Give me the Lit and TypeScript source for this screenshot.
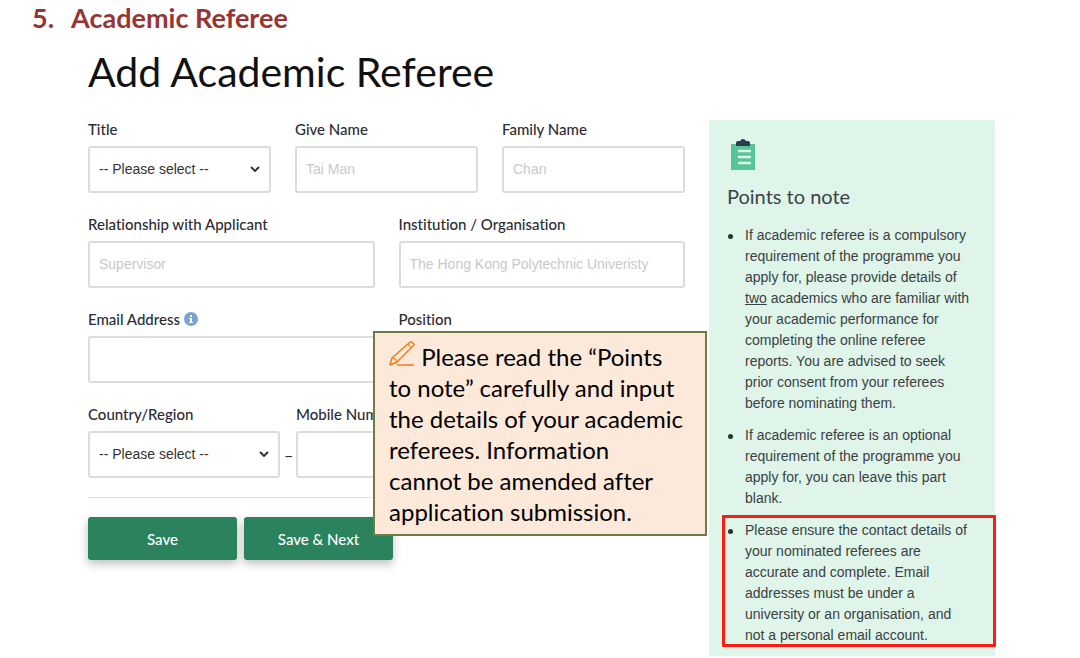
import { LitElement, html, css } from "lit";
import { customElement } from "lit/decorators.js";

@customElement("points-to-note")
class PointsToNote extends LitElement {
  static styles = css`
    :host {
      display: block;
      box-sizing: border-box;
      padding: 19px 16px 10px 18px;
      background: #dff5ea;
      color: #3b4043;
      font-family: "Liberation Sans", Arial, sans-serif;
    }
    .icon {
      display: block;
      width: 26px;
      height: 32px;
      margin-left: 3px;
    }
    .title {
      margin: 12px 0 16px;
      font: 400 20px/26px Lato, sans-serif;
      color: #3a4447;
    }
    .list {
      margin: 0;
      padding: 0;
      list-style: none;
    }
    .item {
      position: relative;
      margin-bottom: 11px;
      padding: 0 7px 0 18px;
      font-size: 14px;
      line-height: 21px;
    }
    .item:last-child {
      margin-bottom: 0;
    }
    .item::before {
      content: "";
      position: absolute;
      left: 1px;
      top: 9px;
      width: 5px;
      height: 5px;
      border-radius: 50%;
      background: #24332c;
    }
    .marked::after {
      content: "";
      position: absolute;
      inset: -5px -17px -1px -5px;
      border: 3px solid #fb1d14;
      border-radius: 1px;
    }
  `;

  render() {
    return html`
      <svg class="icon" viewBox="0 0 26 32" aria-hidden="true">
        <rect x="1" y="5" width="24" height="26" fill="#56c596" />
        <path d="M6 7V4q0-2 2-2h2q1-2 3-2t3 2h2q2 0 2 2v3z" fill="#2a3d50" />
        <path d="M8 12h13M8 18h13M8 24h13" stroke="#dff5ea" stroke-width="2.4" />
      </svg>
      <h2 class="title">Points to note</h2>
      <ul class="list">
        <li class="item">
          If academic referee is a compulsory requirement of the programme you
          apply for, please provide details of <u>two</u> academics who are
          familiar with your academic performance for completing the online
          referee reports. You are advised to seek prior consent from your
          referees before nominating them.
        </li>
        <li class="item">
          If academic referee is an optional requirement of the programme you
          apply for, you can leave this part blank.
        </li>
        <li class="item marked">
          Please ensure the contact details of your nominated referees are
          accurate and complete. Email addresses must be under a university or
          an organisation, and not a personal email account.
        </li>
      </ul>
    `;
  }
}

@customElement("app-root")
class AppRoot extends LitElement {
  static styles = css`
    :host {
      display: block;
      background: #fff;
      color: #2c2c34;
      font-family: Lato, sans-serif;
      font-variant-ligatures: none;
    }
    .section {
      display: flex;
      gap: 17px;
      margin: 0;
      padding: 2px 32px 0;
      font-size: 27px;
      line-height: 32px;
      font-weight: 700;
      color: #963634;
    }
    .page {
      padding: 14px 85px 0 88px;
    }
    .heading {
      margin: 0 0 24px;
      font-size: 41px;
      line-height: 48px;
      font-weight: 400;
      color: #111;
    }
    .columns {
      display: grid;
      grid-template-columns: minmax(0, 1fr) 286px;
      gap: 24px;
      align-items: start;
    }
    .form {
      position: relative;
    }
    .row {
      display: grid;
      gap: 24px;
      margin-bottom: 22px;
    }
    .three {
      grid-template-columns: repeat(3, minmax(0, 1fr));
    }
    .two {
      grid-template-columns: repeat(2, minmax(0, 1fr));
    }
    .phone {
      grid-template-columns: 192px 8px minmax(0, 1fr);
      gap: 4px;
      align-items: end;
      margin-bottom: 19px;
    }
    .dash {
      line-height: 47px;
      text-align: center;
    }
    .field {
      display: flex;
      flex-direction: column;
      gap: 8px;
      min-width: 0;
    }
    .label {
      display: flex;
      align-items: center;
      gap: 4px;
      font-size: 15px;
      line-height: 18px;
      font-weight: 500;
      white-space: nowrap;
    }
    .info {
      width: 14px;
      height: 14px;
    }
    .control {
      box-sizing: border-box;
      width: 100%;
      height: 47px;
      margin: 0;
      padding: 0 9px 2px;
      border: 2px solid #dcdcdc;
      border-radius: 3px;
      background: #fff;
      color: #333;
      font: 14px "Liberation Sans", Arial, sans-serif;
      appearance: none;
    }
    .control::placeholder {
      color: #c9c9c9;
      opacity: 1;
    }
    .pick {
      position: relative;
    }
    .chevron {
      position: absolute;
      right: 11px;
      top: 19px;
      width: 10px;
      height: 8px;
      pointer-events: none;
    }
    .actions {
      display: flex;
      gap: 7px;
      padding-top: 19px;
      border-top: 1px solid #e4e4e4;
    }
    .button {
      width: 149px;
      height: 43px;
      border: 0;
      border-radius: 3px;
      background: #2b835d;
      color: #fff;
      font: 500 15px Lato, sans-serif;
      box-shadow: 0 4px 10px rgba(0, 0, 0, 0.25);
    }
    .callout {
      position: absolute;
      top: 211px;
      right: -22px;
      box-sizing: border-box;
      width: 334px;
      margin: 0;
      padding: 8px 20px 7px 14px;
      border: 2px solid #6d7c47;
      background: #fde9da;
      color: #000;
      font-size: 24px;
      line-height: 31px;
    }
    .pen {
      width: 26px;
      height: 25px;
    }
  `;

  private chevron() {
    return html`<svg class="chevron" viewBox="0 0 10 8" aria-hidden="true">
      <path d="M1 2l4 4 4-4" fill="none" stroke="#2b2b2b" stroke-width="1.8" />
    </svg>`;
  }

  private text(id: string, label: unknown, placeholder = "", type = "text") {
    return html`<div class="field">
      <label class="label" for=${id}>${label}</label>
      <input class="control" id=${id} type=${type} placeholder=${placeholder} />
    </div>`;
  }

  private pick(id: string, label: string) {
    return html`<div class="field">
      <label class="label" for=${id}>${label}</label>
      <div class="pick">
        <select class="control" id=${id}>
          <option>-- Please select --</option>
        </select>
        ${this.chevron()}
      </div>
    </div>`;
  }

  render() {
    const info = html`Email Address
      <svg class="info" viewBox="0 0 14 14" aria-hidden="true">
        <circle cx="7" cy="7" r="7" fill="#79a3d3" />
        <path d="M6 3h2v2H6zM5 6h3v4h1v1H5v-1h1V7H5z" fill="#fff" />
      </svg>`;
    return html`
      <h2 class="section"><span>5.</span><span>Academic Referee</span></h2>
      <main class="page">
        <h1 class="heading">Add Academic Referee</h1>
        <div class="columns">
          <form class="form">
            <div class="row three">
              ${this.pick("title", "Title")}
              ${this.text("given", "Give Name", "Tai Man")}
              ${this.text("family", "Family Name", "Chan")}
            </div>
            <div class="row two">
              ${this.text("relation", "Relationship with Applicant", "Supervisor")}
              ${this.text("institution", "Institution / Organisation", "The Hong Kong Polytechnic Univeristy")}
            </div>
            <div class="row two">
              ${this.text("email", info, "", "email")}
              ${this.text("position", "Position")}
            </div>
            <div class="row phone">
              ${this.pick("country", "Country/Region")}
              <span class="dash">–</span>
              ${this.text("mobile", "Mobile Number", "", "tel")}
            </div>
            <div class="actions">
              <button class="button" type="button">Save</button>
              <button class="button" type="button">Save &amp; Next</button>
            </div>
            <p class="callout">
              <svg class="pen" viewBox="0 0 26 25" aria-hidden="true">
                <g fill="none" stroke="#f07d17" stroke-width="1.5" stroke-linejoin="round">
                  <path d="M1 24l2-7L20 2q2-2 4 0t0 3L8 21z" />
                  <path d="M3 17q4 0 5 4M19 3l3 4" stroke-width="1.2" />
                  <path d="M8 24h17" />
                </g>
              </svg>
              Please read the “Points to note” carefully and input the details
              of your academic referees. Information cannot be amended after
              application submission.
            </p>
          </form>
          <points-to-note></points-to-note>
        </div>
      </main>
    `;
  }
}
